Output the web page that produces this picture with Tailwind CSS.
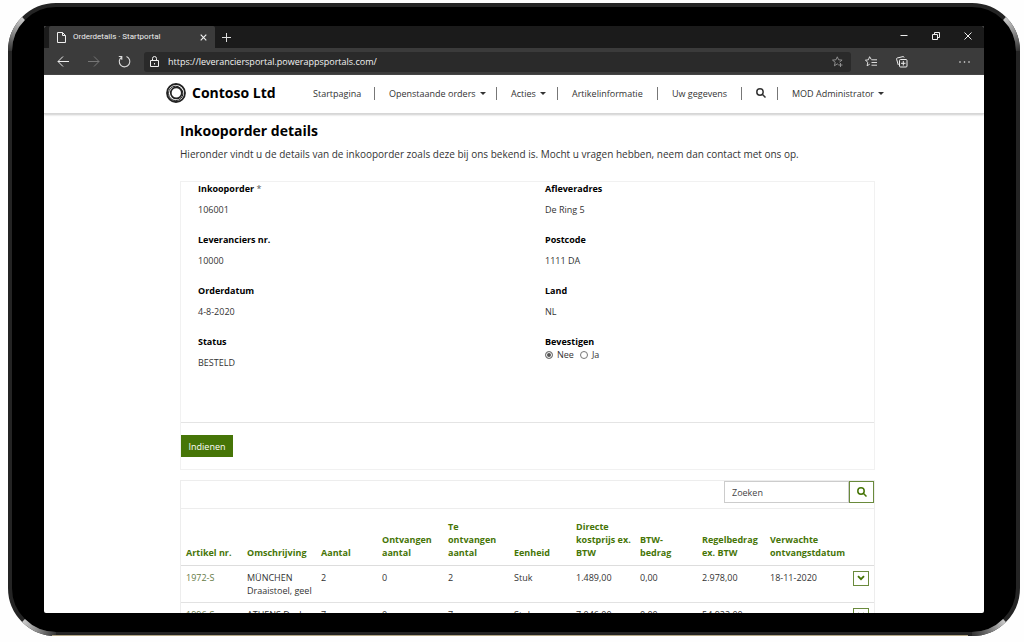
<!DOCTYPE html>
<html lang="nl">
<head>
<meta charset="utf-8">
<meta name="viewport" content="width=device-width, initial-scale=1">
<title>Orderdetails · Startportal</title>
<script src="https://cdn.jsdelivr.net/npm/@tailwindcss/browser@4"></script>
</head>
<body class="h-screen overflow-hidden bg-[#fefefe] pt-[3px] pr-1 pb-1.5 pl-2 font-['Open_Sans','Noto_Sans',sans-serif] text-[9px] leading-[13px] text-[#333]">
<div class="relative flex h-full flex-col rounded-[48px] border-4 border-[#242424] bg-black px-8 py-[19px]">
  <!-- metallic corner highlights -->
  <svg class="absolute -top-1 -left-1 size-12" viewBox="0 0 48 48" fill="none" aria-hidden="true"><defs><linearGradient id="shine-a" gradientUnits="userSpaceOnUse" x1="2" y1="48" x2="15" y2="15"><stop stop-color="#333"/><stop offset=".5" stop-color="#888"/><stop offset="1" stop-color="#ccc"/></linearGradient></defs><path d="M2 48A46 46 0 0 1 15.500 15.500" stroke="url(#shine-a)" stroke-width="4"/></svg>
  <svg class="absolute -top-1 -right-1 size-12" viewBox="0 0 48 48" fill="none" aria-hidden="true"><defs><linearGradient id="shine-b" gradientUnits="userSpaceOnUse" x1="46" y1="48" x2="33" y2="15"><stop stop-color="#333"/><stop offset=".5" stop-color="#888"/><stop offset="1" stop-color="#ccc"/></linearGradient></defs><path d="M46 48A46 46 0 0 0 32.500 15.500" stroke="url(#shine-b)" stroke-width="4"/></svg>
  <svg class="absolute -bottom-1 -left-1 size-12" viewBox="0 0 48 48" fill="none" aria-hidden="true"><defs><linearGradient id="shine-c" gradientUnits="userSpaceOnUse" x1="48" y1="46" x2="15" y2="33"><stop stop-color="#333"/><stop offset=".5" stop-color="#888"/><stop offset="1" stop-color="#ccc"/></linearGradient></defs><path d="M48 46A46 46 0 0 1 15.500 32.500" stroke="url(#shine-c)" stroke-width="4"/></svg>
  <svg class="absolute -right-1 -bottom-1 size-12" viewBox="0 0 48 48" fill="none" aria-hidden="true"><defs><linearGradient id="shine-d" gradientUnits="userSpaceOnUse" x1="0" y1="46" x2="33" y2="33"><stop stop-color="#333"/><stop offset=".5" stop-color="#777"/><stop offset="1" stop-color="#ccc"/></linearGradient></defs><path d="M0 46A46 46 0 0 0 32.500 32.500" stroke="url(#shine-d)" stroke-width="4"/></svg>
  <div class="absolute right-12 -bottom-1 left-10 h-px bg-[#b3a684]"></div>

  <div class="flex min-h-0 flex-1 flex-col overflow-hidden rounded-[2px] bg-white">
    <!-- tab strip -->
    <div class="flex h-[22px] shrink-0 bg-[#1b1b1b] pl-[5px] text-[#eee]">
      <div class="flex w-[166px] items-center rounded-t-[2px] bg-[#3b3b3b] pr-1.5 pl-2">
        <svg class="h-[11px] w-[9px]" viewBox="0 0 9 11" fill="none" stroke="#eee" aria-hidden="true"><path d="M.5.5h5l3 3v7h-8zM5.500.5v3h3"/></svg>
        <span class="ml-[7px] flex-1 font-['Roboto',sans-serif] text-[8px] leading-3 whitespace-nowrap">Orderdetails · Startportal</span>
        <button aria-label="Tabblad sluiten" class="flex size-3 items-center justify-center"><svg class="size-[7px]" viewBox="0 0 7 7" stroke="#eee" stroke-width="1.200"><path d="M.7.7l5.600 5.600M6.300.7L.7 6.300"/></svg></button>
      </div>
      <button aria-label="Nieuw tabblad" class="flex w-[23px] items-center justify-center"><svg class="size-[9px]" viewBox="0 0 9 9" stroke="#ddd"><path d="M4.500 0v9M0 4.500h9"/></svg></button>
      <div class="ml-auto flex h-5">
        <button aria-label="Minimaliseren" class="flex w-8 items-center justify-center"><svg class="size-2" viewBox="0 0 8 8" stroke="#eee"><path d="M.5 3.500h7"/></svg></button>
        <button aria-label="Verkleinen" class="flex w-8 items-center justify-center"><svg class="size-2" viewBox="0 0 8 8" stroke="#eee" fill="none"><path d="M.5 2.500h5v5h-5zM2.500 2V.5h5v5H6"/></svg></button>
        <button aria-label="Sluiten" class="flex w-8 items-center justify-center"><svg class="size-2" viewBox="0 0 8 8" stroke="#eee"><path d="M.5.5l7 7M7.500.5l-7 7"/></svg></button>
      </div>
    </div>
    <!-- toolbar -->
    <div class="flex h-[27px] shrink-0 items-center bg-[#3b3b3b] pl-[13px]">
      <button aria-label="Terug"><svg class="h-[11px] w-3" viewBox="0 0 12 11" fill="none" stroke="#eee"><path d="M12 5.500H1M6 .5L1 5.500l5 5"/></svg></button>
      <button aria-label="Vooruit" class="ml-[19px]"><svg class="h-[11px] w-3" viewBox="0 0 12 11" fill="none" stroke="#777"><path d="M0 5.500h11M6 .5l5 5-5 5"/></svg></button>
      <button aria-label="Vernieuwen" class="ml-[18px]"><svg class="size-[13px]" viewBox="0 0 13 13" fill="none" stroke="#ddd" stroke-width="1.100"><path d="M8.500 1.600A5.300 5.300 0 1 1 3.500 2.200M3.800 4.700V1.500H.8"/></svg></button>
      <div class="ml-[13px] flex h-5 flex-1 items-center rounded-[3px] bg-[#2a2a2a] pr-2 pl-[6px]">
        <svg class="h-[11px] w-[9px]" viewBox="0 0 9 11" fill="none" stroke="#eee" aria-hidden="true"><path d="M.5 4.500h8v6h-8zM2.500 4.500V2.500a2 2 0 0 1 4 0v2"/><path d="M4.500 7v1.500"/></svg>
        <input aria-label="Adres" value="https://leveranciersportal.powerappsportals.com/" class="ml-[9px] min-w-0 flex-1 bg-transparent text-[#f2f2f2] outline-none">
        <button aria-label="Favoriet toevoegen"><svg class="size-[11px]" viewBox="0 0 11 11" fill="none" stroke="#999" stroke-width=".9"><path d="M5.300.8l1.300 3 3.500.3-2.700 2.100M5.300.8L4 3.800.5 4.100l2.700 2.200-.8 3.500 2.900-1.900 1 .6M8.500 7v4M6.500 9h4"/></svg></button>
      </div>
      <button aria-label="Favorieten" class="ml-[14px]"><svg class="h-[11px] w-3" viewBox="0 0 12 11" fill="none" stroke="#eee" stroke-width=".9"><path d="M6.300 3.500L4.600.7 3.400 3.800.4 4.200l2.400 2.100-.7 3.500 2.700-1.700M6.500 3.800H12M6.500 6.500H12M6.500 9.200H12"/></svg></button>
      <button aria-label="Verzamelingen" class="ml-[19px]"><svg class="size-3" viewBox="0 0 12 12" fill="none" stroke="#eee"><rect x="3.500" y="3.500" width="7.500" height="7.500" rx="1"/><path d="M7.300 5v4.500M5 7.300h4.500M2.300 9L.6 3.200Q.4 2.300 1.200 2L7 .6q.8-.2 1.100.9"/></svg></button>
      <button aria-label="Meer" class="mr-[14px] ml-[51px]"><svg class="h-1 w-[11px]" viewBox="0 0 11 4" fill="#eee"><circle cx="1" cy="2" r=".8"/><circle cx="5.500" cy="2" r=".8"/><circle cx="10" cy="2" r=".8"/></svg></button>
    </div>

    <header class="flex h-[39px] shrink-0 items-center border-b border-[#d6d6d6] pb-0.5 pl-[122px] shadow-[0_1px_2px_#ccc]">
      <a href="#" class="flex items-center text-[14px] leading-5 font-bold text-black">
        <svg class="mr-[6px] size-5" viewBox="0 0 20 20" fill="none" stroke="#222" aria-hidden="true"><circle cx="10" cy="10" r="9" stroke-width="1.800"/><circle cx="9.700" cy="10.400" r="7.200" stroke-width="1"/><circle cx="10.300" cy="9.900" r="5.500" stroke-width="1.700"/></svg>
        <span class="w-[86px] whitespace-nowrap">Contoso Ltd</span></a>
      <nav class="ml-[21px] flex items-center whitespace-nowrap">
        <a href="#" class="w-[76px] border-r border-[#777] pl-3.5">Startpagina</a>
        <a href="#" class="flex w-[122px] items-center gap-1 border-r border-[#777] pl-3.5">Openstaande orders <span class="border-x-[3px] border-t-[3px] border-x-transparent border-t-[#333]"></span></a>
        <a href="#" class="flex w-[61px] items-center gap-1 border-r border-[#777] pl-3.5">Acties <span class="border-x-[3px] border-t-[3px] border-x-transparent border-t-[#333]"></span></a>
        <a href="#" class="w-[100px] border-r border-[#777] pl-3.5">Artikelinformatie</a>
        <a href="#" class="w-[84px] border-r border-[#777] pl-3.5">Uw gegevens</a>
        <a href="#" aria-label="Zoeken" class="flex h-[13px] w-9 items-center border-r border-[#777] pl-3.5"><svg class="size-2.5" viewBox="0 0 10 10" fill="none" stroke="#333" stroke-width="1.500"><circle cx="4" cy="4" r="3.200"/><path d="M6.300 6.300l3.200 3.200"/></svg></a>
        <a href="#" class="flex items-center gap-1 pl-3.5">MOD Administrator <span class="border-x-[3px] border-t-[3px] border-x-transparent border-t-[#333]"></span></a>
      </nav>
    </header>

    <main class="min-h-0 flex-1 overflow-hidden pt-[7px] pr-[109px] pl-[136px]">
      <h1 class="text-[14px] leading-5 font-bold text-black">Inkooporder details</h1>
      <p class="mt-[6px] text-[10px] leading-[14px]">Hieronder vindt u de details van de inkooporder zoals deze bij ons bekend is. Mocht u vragen hebben, neem dan contact met ons op.</p>

      <form class="mt-5 border border-[#f1f1f1]">
        <div class="grid h-[241px] grid-cols-2 content-start border-b border-[#e4e4e4] pl-[17px]">
          <dl class="grid auto-rows-[51px]">
            <div><dt class="font-bold text-black">Inkooporder <span class="text-[#555] font-normal">*</span></dt><dd class="mt-2">106001</dd></div>
            <div><dt class="font-bold text-black">Leveranciers nr.</dt><dd class="mt-2">10000</dd></div>
            <div><dt class="font-bold text-black">Orderdatum</dt><dd class="mt-2">4-8-2020</dd></div>
            <div><dt class="font-bold text-black">Status</dt><dd class="mt-2">BESTELD</dd></div>
          </dl>
          <div class="pl-[9px]">
            <dl class="grid auto-rows-[51px]">
              <div><dt class="font-bold text-black">Afleveradres</dt><dd class="mt-2">De Ring 5</dd></div>
              <div><dt class="font-bold text-black">Postcode</dt><dd class="mt-2">1111 DA</dd></div>
              <div><dt class="font-bold text-black">Land</dt><dd class="mt-2">NL</dd></div>
            </dl>
            <fieldset>
              <legend class="font-bold text-black">Bevestigen</legend>
              <div class="flex items-center">
                <input type="radio" id="nee" name="bevestigen" checked class="size-2 appearance-none rounded-full border border-[#777] bg-white checked:bg-[#555] checked:shadow-[inset_0_0_0_1px_white]"><label for="nee" class="ml-1">Nee</label>
                <input type="radio" id="ja" name="bevestigen" class="ml-[6px] size-2 appearance-none rounded-full border border-[#777] bg-white checked:bg-[#555] checked:shadow-[inset_0_0_0_1px_white]"><label for="ja" class="ml-1">Ja</label>
              </div>
            </fieldset>
          </div>
        </div>
        <button type="button" class="mt-3 mb-3 block h-[22px] w-[52px] bg-[#467507] text-white">Indienen</button>
      </form>

      <section class="mt-[10px] border border-[#ededed]">
        <div class="flex h-7 justify-end border-b border-[#ededed]">
          <input aria-label="Zoeken" placeholder="Zoeken" class="h-[22px] w-[125px] border border-[#ccc] px-[7px] outline-none placeholder:text-[#444]">
          <button aria-label="Zoeken" class="flex h-[22px] w-[25px] items-center justify-center border border-[#6a8a3c]"><svg class="size-2.5" viewBox="0 0 10 10" fill="none" stroke="#467507" stroke-width="1.500"><circle cx="4" cy="4" r="3.200"/><path d="M6.300 6.300l3.200 3.200"/></svg></button>
        </div>
        <table class="w-full table-fixed border-collapse text-left">
          <colgroup><col class="w-[61px]"><col class="w-[74px]"><col class="w-[61px]"><col class="w-[66px]"><col class="w-[66px]"><col class="w-[62px]"><col class="w-[64px]"><col class="w-[62px]"><col class="w-[68px]"><col class="w-[83px]"><col></colgroup>
          <thead>
            <tr class="h-14 border-b border-[#ddd] align-bottom text-[#467507] *:pb-[6px] *:pl-[5px]">
              <th>Artikel nr.</th><th>Omschrijving</th><th>Aantal</th><th>Ontvangen aantal</th><th>Te ontvangen aantal</th><th>Eenheid</th><th>Directe kostprijs ex. BTW</th><th>BTW-<br>bedrag</th><th>Regelbedrag ex. BTW</th><th>Verwachte ontvangstdatum</th><th aria-label="Acties"></th>
            </tr>
          </thead>
          <tbody>
            <tr class="h-[37px] border-b border-[#e2e2e2] align-top *:pt-[5px] *:pl-[5px]">
              <td><a href="#" class="text-[#667a45]">1972-S</a></td><td>MÜNCHEN Draaistoel, geel</td><td>2</td><td>0</td><td>2</td><td>Stuk</td><td>1.489,00</td><td>0,00</td><td>2.978,00</td><td>18-11-2020</td>
              <td><button aria-label="Acties" class="flex h-[15px] w-4 items-center justify-center border border-[#6a8a3c]"><svg class="h-1.5 w-2" viewBox="0 0 8 6" fill="none" stroke="#467507" stroke-width="1.900"><path d="M1 1.200l3 3 3-3"/></svg></button></td>
            </tr>
            <tr class="h-[37px] border-b border-[#e2e2e2] align-top *:pt-[5px] *:pl-[5px]">
              <td><a href="#" class="text-[#667a45]">1996-S</a></td><td>ATHENS Desk</td><td>7</td><td>0</td><td>7</td><td>Stuk</td><td>7.046,00</td><td>0,00</td><td>54.922,00</td><td></td>
              <td><button aria-label="Acties" class="flex h-[15px] w-4 items-center justify-center border border-[#6a8a3c]"><svg class="h-1.5 w-2" viewBox="0 0 8 6" fill="none" stroke="#467507" stroke-width="1.900"><path d="M1 1.200l3 3 3-3"/></svg></button></td>
            </tr>
          </tbody>
        </table>
      </section>
    </main>
  </div>
</div>
</body>
</html>
